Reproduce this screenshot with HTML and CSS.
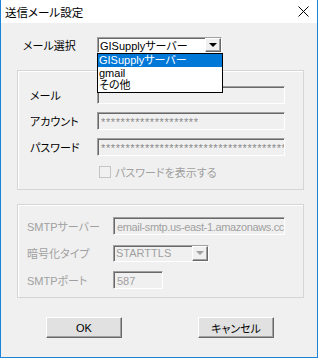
FILE: index.html
```html
<!DOCTYPE html>
<html>
	<head>
		<meta charset="UTF-8">
		<title>送信メール設定</title>
		<link rel="stylesheet" href="styles.css">
	</head>
	<body>
		<div class="win">
			<div class="titlebar">
				<span class="title">送信メール設定</span>
				<span class="close">
					<svg width="11" height="11" viewBox="0 0 11 11"><path d="M0.5 0.5L10.5 10.5M10.5 0.5L0.5 10.5" stroke="#000" stroke-width="1" fill="none"/></svg>
				</span>
			</div>
			<div class="content">
				<!-- メール選択 -->
				<div class="selrow">
					<span class="lbl1">メール選択</span>
					<div class="combo">
						<span class="ctext">GISupplyサーバー</span>
						<span class="cbtn"><i class="tri"></i></span>
						<ul class="dlist">
							<li class="on">GISupplyサーバー</li>
							<li>gmail</li>
							<li>その他</li>
						</ul>
					</div>
				</div>
				<!-- アカウント -->
				<div class="group g1">
					<div class="row">
						<span class="lbl2">メール</span>
						<div class="field f1"></div>
					</div>
					<div class="row">
						<span class="lbl2">アカウント</span>
						<div class="field f1 pw">********************</div>
					</div>
					<div class="row">
						<span class="lbl2">パスワード</span>
						<div class="field f1 pw">****************************************</div>
					</div>
					<div class="chkrow">
						<span class="chk"></span>
						<span class="chktext">パスワードを表示する</span>
					</div>
				</div>
				<!-- SMTP -->
				<div class="group g2">
					<div class="row">
						<span class="lbl3">SMTPサーバー</span>
						<div class="field f2">email-smtp.us-east-1.amazonaws.cc</div>
					</div>
					<div class="row">
						<span class="lbl3">暗号化タイプ</span>
						<div class="field f3">
							<span class="ctext">STARTTLS</span>
							<span class="cbtn off"><i class="tri"></i></span>
						</div>
					</div>
					<div class="row">
						<span class="lbl3">SMTPポート</span>
						<div class="field f4">587</div>
					</div>
				</div>
				<div class="btns">
					<span class="btn">OK</span>
					<span class="btn">キャンセル</span>
				</div>
			</div>
		</div>
	</body>
</html>
```

FILE: styles.css
```css
*{margin:0;padding:0;box-sizing:border-box;}
ul{list-style:none;}
html,body{height:100%;}
body{
	background:#fff;
	font-family:"Liberation Sans","Noto Sans CJK JP",sans-serif;
	font-size:11px;
	font-feature-settings:"palt";
	color:#000;
}
.win{
	width:318px;
	height:358px;
	border:1px solid #1c84d8;
	border-top:0;
	display:flex;
	flex-direction:column;
}
.titlebar{
	height:23px;
	background:#fff;
	display:flex;
	align-items:center;
	justify-content:space-between;
	padding:0 8px 0 4px;
}
.title{font-size:11.5px;}
.close{display:flex;}
.content{
	flex:1;
	background:#f0f0f0;
	padding-top:14px;
}
.selrow{
	display:flex;
	align-items:center;
	height:16px;
	padding-left:22px;
}
.lbl1{width:74px;}
.combo{
	position:relative;
	width:125px;
	height:16px;
	background:#fff;
	border:1px solid;
	border-color:#a0a0a0 #fff #fff #a0a0a0;
	box-shadow:inset 1px 1px #696969;
	display:flex;
	align-items:center;
	padding-left:2px;
}
.ctext{flex:1;white-space:nowrap;overflow:hidden;}
.cbtn{
	width:16px;
	height:14px;
	background:#f0f0f0;
	border:1px solid;
	border-color:#fff #696969 #696969 #fff;
	box-shadow:inset -1px -1px #a0a0a0;
	display:flex;
	align-items:center;
	justify-content:center;
}
.tri{
	width:0;height:0;
	border-left:4px solid transparent;
	border-right:4px solid transparent;
	border-top:4px solid #000;
}
.cbtn.off .tri{border-top-color:#a0a0a0;}
.dlist{
	position:absolute;
	top:15px;
	left:-1px;
	width:126px;
	background:#fff;
	border:1px solid #000;
	z-index:5;
}
.dlist li{
	height:12.5px;
	line-height:12.5px;
	padding-left:1px;
	white-space:nowrap;
}
.dlist li.on{background:#0078d7;color:#fff;}
.group{
	margin-left:16px;
	width:287px;
	border:1px solid #d5d5d5;
	box-shadow:inset 1px 1px #fff;
	display:flex;
	flex-direction:column;
	gap:8px;
}
.g1{margin-top:17px;height:120px;padding:15px 0 0 12px;}
.g2{margin-top:14px;height:94px;padding:12px 0 0 9px;gap:9px;}
.row{display:flex;align-items:center;height:18px;}
.lbl2{width:67px;}
.lbl3{width:86px;color:#a0a0a0;}
.field{
	height:18px;
	background:#f0f0f0;
	border:1px solid;
	border-color:#a0a0a0 #fff #fff #a0a0a0;
	box-shadow:inset 1px 1px #696969;
	padding:1px 0 0 3px;
	display:flex;
	align-items:center;
	white-space:nowrap;
	overflow:hidden;
	color:#a0a0a0;
}
.pw{color:#8a8a8a;letter-spacing:0.6px;}
.f1{width:188px;}
.f2{width:172px;letter-spacing:-0.35px;}
.f3{width:96px;height:17px;padding:0 0 0 2px;}
.f3 .cbtn{height:15px;}
.f4{width:50px;}
.chkrow{display:flex;align-items:center;padding-left:69px;}
.chk{
	width:12px;height:12px;
	border:1px solid #c5c5c5;
	background:#f0f0f0;
	margin-right:4px;
}
.chktext{color:#a0a0a0;}
.btns{
	display:flex;
	gap:76px;
	padding-left:45px;
	margin-top:19px;
}
.btn{
	width:76px;
	height:21px;
	background:#e1e1e1;
	border:1px solid;
	border-color:#fff #696969 #696969 #fff;
	box-shadow:inset -1px -1px #a0a0a0;
	display:flex;
	align-items:center;
	justify-content:center;
}
```
